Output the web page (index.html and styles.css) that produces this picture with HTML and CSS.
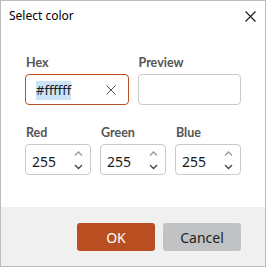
FILE: index.html
```html
<!DOCTYPE html>
<html>
<head>
<meta charset="utf-8">
<link rel="stylesheet" href="styles.css">
</head>
<body>
<div class="dialog">
  <div class="titlebar">
    <span class="title">Select color</span>
    <span class="close">
      <svg width="11" height="11" viewBox="0 0 11 11"><path d="M0.5 0.5 L10.5 10.5 M10.5 0.5 L0.5 10.5" stroke="#1a1a1a" stroke-width="1.1" fill="none"/></svg>
    </span>
  </div>
  <div class="content">
    <div class="row two">
      <div class="field">
        <div class="label">Hex</div>
        <div class="box hex">
          <span class="sel">#ffffff</span>
          <svg class="clear" width="10" height="10" viewBox="0 0 10 10"><path d="M0.5 0.5 L9.5 9.5 M9.5 0.5 L0.5 9.5" stroke="#555" stroke-width="1" fill="none"/></svg>
        </div>
      </div>
      <div class="field">
        <div class="label">Preview</div>
        <div class="box preview"></div>
      </div>
    </div>
    <div class="row three">
      <div class="field">
        <div class="label">Red</div>
        <div class="box num"><span class="val">255</span>
          <svg class="spin" width="9" height="19" viewBox="0 0 9 19"><path class="up" d="M1 4.5 L4.5 1 L8 4.5"/><path class="down" d="M1 14 L4.5 17.5 L8 14"/></svg>
        </div>
      </div>
      <div class="field">
        <div class="label">Green</div>
        <div class="box num"><span class="val">255</span>
          <svg class="spin" width="9" height="19" viewBox="0 0 9 19"><path class="up" d="M1 4.5 L4.5 1 L8 4.5"/><path class="down" d="M1 14 L4.5 17.5 L8 14"/></svg>
        </div>
      </div>
      <div class="field">
        <div class="label">Blue</div>
        <div class="box num"><span class="val">255</span>
          <svg class="spin" width="9" height="19" viewBox="0 0 9 19"><path class="up" d="M1 4.5 L4.5 1 L8 4.5"/><path class="down" d="M1 14 L4.5 17.5 L8 14"/></svg>
        </div>
      </div>
    </div>
  </div>
  <div class="footer">
    <button class="btn primary">OK</button>
    <button class="btn secondary">Cancel</button>
  </div>
</div>
</body>
</html>
```
FILE: styles.css
```css
html, body {
  margin: 0;
  padding: 0;
  background: #ffffff;
}
body {
  font-family: "Noto Sans", "Open Sans", sans-serif;
  color: #1a1a1a;
}
.dialog {
  box-sizing: border-box;
  width: 266px;
  height: 267px;
  border: 1px solid #bdbdbd;
  background: #ffffff;
  display: flex;
  flex-direction: column;
}
.titlebar {
  display: flex;
  align-items: center;
  justify-content: space-between;
  height: 30px;
  padding: 0 9px 0 8px;
}
.title {
  font-size: 12px;
  line-height: 16px;
  color: #000;
}
.close {
  display: flex;
  width: 11px;
  height: 11px;
}
.content {
  padding: 24px 24px 0 24px;
  display: flex;
  flex-direction: column;
  gap: 20px;
}
.row {
  display: grid;
  column-gap: 9px;
}
.row.two { grid-template-columns: 1fr 1fr; }
.row.three { grid-template-columns: 1fr 1fr 1fr; }
.field {
  display: flex;
  flex-direction: column;
  gap: 4px;
}
.label {
  font-family: Lato, "Noto Sans", sans-serif;
  font-weight: 700;
  font-size: 12.5px;
  line-height: 15px;
  color: #555555;
  padding-left: 1px;
}
.box {
  box-sizing: border-box;
  height: 31px;
  border: 1px solid #c9c9c9;
  border-radius: 4px;
  background: #fff;
  display: flex;
  align-items: center;
}
.hex {
  border-color: #b9501f;
  padding: 0 12px 0 10px;
  justify-content: space-between;
}
.sel {
  background: #cce4f7;
  font-size: 13px;
  line-height: 19px;
  color: #1a1a1a;
  margin-top: 2px;
}
.clear {
  display: block;
}
.num {
  padding: 0 7px 0 6px;
  justify-content: space-between;
}
.val {
  font-size: 14px;
  line-height: 19px;
  color: #1a1a1a;
  margin-top: 3px;
}
.spin {
  display: block;
  margin-top: 1px;
}
.spin path {
  fill: none;
  stroke-width: 1.3;
}
.spin .up { stroke: #9a9a9a; }
.spin .down { stroke: #444; }
.footer {
  margin-top: auto;
  height: 59px;
  box-sizing: border-box;
  background: #f0f0f0;
  display: flex;
  justify-content: flex-end;
  align-items: flex-start;
  gap: 8px;
  padding: 16px 24px 0 24px;
}
.btn {
  width: 78px;
  height: 28px;
  border: none;
  border-radius: 3px;
  font-family: "Noto Sans", "Open Sans", sans-serif;
  font-size: 14px;
  padding: 0;
}
.primary {
  background: #b94f20;
  color: #ffffff;
}
.secondary {
  background: #c1c2c3;
  color: #222222;
}
```
